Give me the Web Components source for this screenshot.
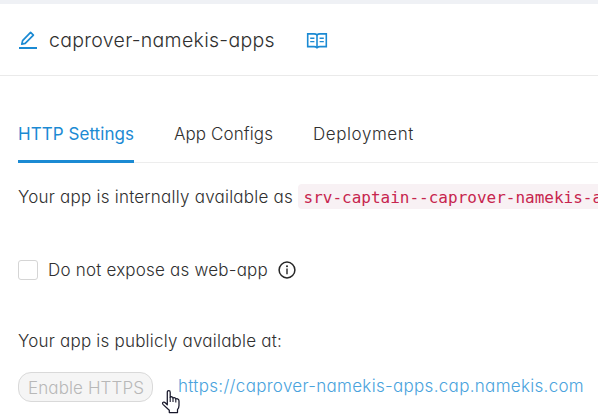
<!DOCTYPE html>
<html lang="en">
<head>
<meta charset="utf-8">
<title>caprover-namekis-apps</title>
<style>
html,body{margin:0;background:#fff;overflow:hidden}
body{width:598px;height:417px}
</style>
</head>
<body>
<app-details></app-details>
<script>
const define = (name, html, ready) => customElements.define(name, class extends HTMLElement {
  connectedCallback() {
    if (this.shadowRoot) return;
    const t = document.createElement('template');
    t.innerHTML = html;
    this.attachShadow({mode: 'open'}).append(t.content.cloneNode(true));
    if (ready) ready(this);
  }
});

/* A single line of text tracked to an even measure. */
define('tracked-text', `<style>
:host{display:inline-block;white-space:nowrap;flex:none}
span{display:inline-block}
</style><span><slot></slot></span>`, el => {
  const target = +el.getAttribute('measure');
  const natural = el.shadowRoot.querySelector('span').getBoundingClientRect().width;
  el.style.letterSpacing = (target - natural) / el.textContent.length + 'px';
  el.style.width = target + 'px';
});

define('edit-icon', `<style>:host{display:block;width:20px;height:20px;color:#1b8ad3}svg{display:block}</style>
<svg width="20" height="20" viewBox="0 0 20 20" fill="none" stroke="currentColor"><path d="M4.6 10.6 12.6 2.4 15.4 5.2 7.2 13.4 3.8 14.2Z" stroke-width="1.7" stroke-linejoin="round"/><path d="M1 18H19" stroke-width="2"/></svg>`);

define('book-icon', `<style>:host{display:block;width:22px;height:18px;color:#1b8ad3}svg{display:block}</style>
<svg width="22" height="18" viewBox="0 0 22 18" fill="none" stroke="currentColor"><path d="M1.7 1.9H8Q10 1.9 11 2.8Q12 1.9 14 1.9H20.3V14.6H14Q12 14.6 11 15.8Q10 14.6 8 14.6H1.7Z" stroke-width="1.6"/><path d="M11 2.8V15.2" stroke-width="1.6"/><path d="M4.2 6.2H8.4M4.2 9.6H8.4M13.6 6.2H17.8M13.6 9.6H17.8" stroke-width="1.4"/></svg>`);

define('info-icon', `<style>:host{display:block;width:18px;height:18px;color:#262626}svg{display:block}</style>
<svg width="18" height="18" viewBox="0 0 18 18"><circle cx="9" cy="9" r="7.9" fill="none" stroke="currentColor" stroke-width="1.5"/><circle cx="9" cy="5.3" r="1" fill="currentColor"/><path d="M9 7.6V13.3" stroke="currentColor" stroke-width="1.4"/></svg>`);

define('card-header', `<style>
:host{display:flex;box-sizing:border-box;height:72px;border-bottom:1px solid #eaeaea;padding:1px 18px 0;align-items:center;font-size:19.5px}
edit-icon{margin-right:11px;margin-top:-1px}
book-icon{margin-left:31px;margin-top:1px}
</style><edit-icon></edit-icon><slot></slot><book-icon></book-icon>`);

define('tab-item', `<style>
:host{display:block;box-sizing:border-box;height:53px;line-height:48px;border-bottom:3px solid transparent}
:host([active]){color:#1b8ad3;border-color:#1b8ad3;font-weight:400}
</style><slot></slot>`);

define('tab-bar', `<style>
:host{display:flex;gap:40px;height:53px;margin:34px 0 0 18px;background:linear-gradient(#ededed,#ededed) 0 52px/100% 1px no-repeat}
</style><slot></slot>`);

define('code-chip', `<style>
:host{display:inline-block;box-sizing:border-box;height:25px;padding:0 5.5px;border-radius:4px;background:#f8f1f4;color:#c7254e;font:16px/27px "DejaVu Sans Mono",monospace;white-space:nowrap;flex:none}
</style><slot></slot>`);

define('check-box', `<style>
:host{display:flex;align-items:center;gap:10px;height:24px}
i{box-sizing:border-box;width:20px;height:20px;border:1px solid #d5d5d5;border-radius:3px;background:#fff}
</style><i></i><slot></slot><info-icon></info-icon>`);

define('pill-button', `<style>
:host{display:block;width:135px;height:30px}
button{font:inherit;display:flex;justify-content:center;align-items:center;box-sizing:border-box;width:135px;height:30px;margin:0;padding:2px 0 0 1px;border:1px solid #d9d9d9;border-radius:13px;background:#f5f5f5;color:#b8b8b8}
</style><button disabled><slot></slot></button>`);

define('hand-cursor', `<style>:host{position:absolute;left:161px;top:385px;width:20px;height:26px}svg{display:block}</style>
<svg width="20" height="26" viewBox="0 0 20 26"><path d="M6.3 15.8V3.3Q6.3 1.5 7.8 1.5Q9.2 1.5 9.2 3.3V8.2Q9.8 7.5 10.9 7.9Q11.9 8.2 12 9Q12.8 8.4 13.9 8.8Q14.8 9.2 14.8 10Q15.7 9.4 16.6 9.9Q18 10.5 18 12V16.5Q18 18.7 16.5 20.7V23.5H8.3V21.3L2.2 15.6Q.9 14.1 2.1 13.3Q3.2 12.5 4.8 14.2Z" fill="#fff" stroke="#18182b" stroke-width="1.25" stroke-linejoin="round"/><path d="M9.2 8V13M12 9V13M14.8 10V13.5" stroke="#18182b" stroke-width="1.1"/></svg>`);

define('app-details', `<style>
:host{display:block;box-sizing:border-box;width:598px;height:417px;border-top:4px solid #eff1f5;background:#fff;position:relative;overflow:hidden;color:#303030;font:350 17px/24px Inter,"Open Sans",sans-serif;font-feature-settings:"cv11"}
main{display:flex;flex-direction:column;padding-left:18px}
.row{display:flex;align-items:center}
.internal{height:25px;margin-top:21px;gap:5px}
check-box{margin-top:49px}
.public{margin-top:47px;height:24px}
.actions{margin-top:19px;gap:25px}
a{color:#4aa3dd;text-decoration:none;height:26px}
</style>
<card-header><tracked-text measure="226">caprover-namekis-apps</tracked-text></card-header>
<tab-bar>
<tab-item active><tracked-text measure="116">HTTP Settings</tracked-text></tab-item>
<tab-item><tracked-text measure="99">App Configs</tracked-text></tab-item>
<tab-item><tracked-text measure="101">Deployment</tracked-text></tab-item>
</tab-bar>
<main>
<div class="row internal"><tracked-text measure="275">Your app is internally available as</tracked-text><code-chip>srv-captain--caprover-namekis-apps</code-chip></div>
<check-box><tracked-text measure="220">Do not expose as web-app</tracked-text></check-box>
<div class="row public"><tracked-text measure="264">Your app is publicly available at:</tracked-text></div>
<div class="row actions"><pill-button><tracked-text measure="116">Enable HTTPS</tracked-text></pill-button><a href="#"><tracked-text measure="406">https://caprover-namekis-apps.cap.namekis.com</tracked-text></a></div>
</main>
<hand-cursor></hand-cursor>`);
</script>
</body>
</html>
